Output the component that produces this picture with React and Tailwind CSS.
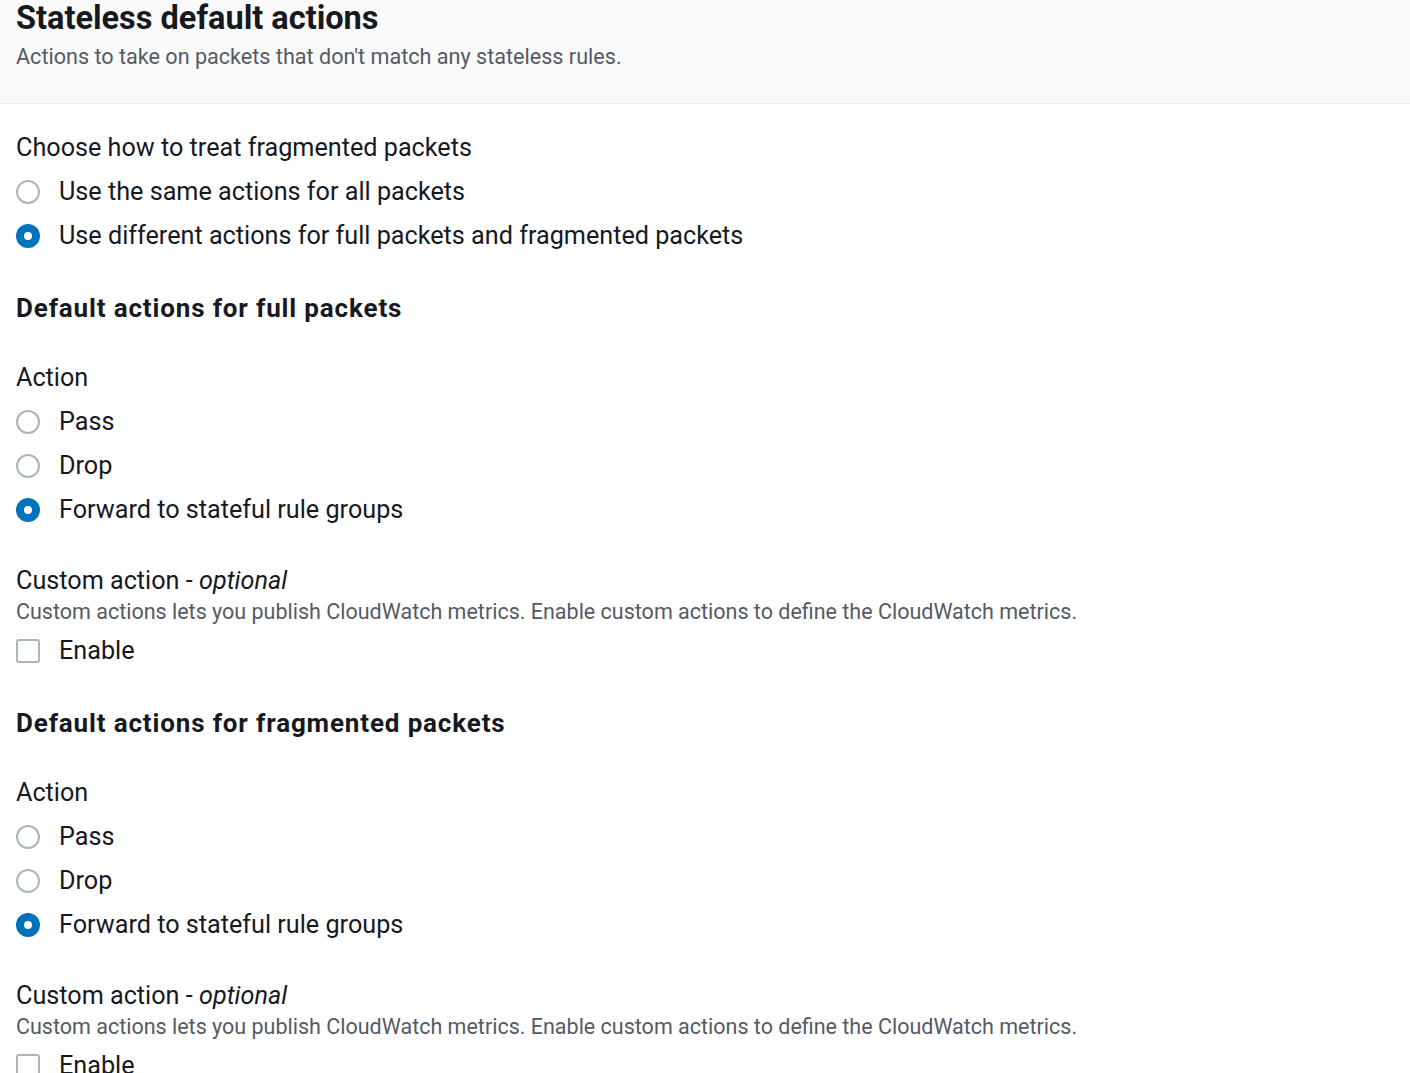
import React from "react";

const font = { fontFamily: "Roboto, 'Open Sans', sans-serif" };

function Radio({ checked, label }) {
  return (
    <div className="flex items-center h-[44px]">
      {checked ? (
        <span className="box-border w-[24px] h-[24px] rounded-full border-[8px] border-[#0073bb] bg-white shrink-0" />
      ) : (
        <span className="box-border w-[24px] h-[24px] rounded-full border-2 border-[#aab7b8] bg-white shrink-0" />
      )}
      <span className="ml-[19px] text-[25.2px] text-[#16191f] whitespace-nowrap">{label}</span>
    </div>
  );
}

function Section({ title }) {
  return (
    <div>
      <div className="h-[44px] flex items-center text-[26px] tracking-[0.85px] font-bold text-[#16191f] whitespace-nowrap">{title}</div>
      <div className="mt-[26px] h-[44px] flex items-center text-[25.2px] text-[#16191f]">Action</div>
      <Radio label="Pass" />
      <Radio label="Drop" />
      <Radio checked label="Forward to stateful rule groups" />
      <div className="mt-[33px] h-[32px] flex items-center text-[25.2px] text-[#16191f] whitespace-nowrap">
        Custom action -&nbsp;<i>optional</i>
      </div>
      <div className="h-[30px] flex items-center text-[21.5px] text-[#545b64] whitespace-nowrap">
        Custom actions lets you publish CloudWatch metrics. Enable custom actions to define the CloudWatch metrics.
      </div>
      <div className="mt-[4px] h-[40px] flex items-center">
        <span className="box-border w-[24px] h-[24px] rounded-[3px] border-2 border-[#aab7b8] bg-white shrink-0" />
        <span className="ml-[19px] text-[25.2px] text-[#16191f]">Enable</span>
      </div>
    </div>
  );
}

export default function App() {
  return (
    <div className="w-[1410px] h-[1073px] overflow-hidden bg-white" style={font}>
      <div className="h-[104px] bg-[#fafafa] border-b border-[#eaeded] pl-[16px]">
        <div className="h-[36px] flex items-center text-[32.5px] font-bold text-[#16191f] whitespace-nowrap">Stateless default actions</div>
        <div className="mt-[7px] h-[28px] flex items-center text-[21.6px] text-[#545b64] whitespace-nowrap">
          Actions to take on packets that don't match any stateless rules.
        </div>
      </div>
      <div className="pl-[16px] pt-[22px]">
        <div className="h-[44px] flex items-center text-[25.2px] text-[#16191f] whitespace-nowrap">Choose how to treat fragmented packets</div>
        <Radio label="Use the same actions for all packets" />
        <Radio checked label="Use different actions for full packets and fragmented packets" />
        <div className="mt-[28px]">
          <Section title="Default actions for full packets" />
        </div>
        <div className="mt-[30px]">
          <Section title="Default actions for fragmented packets" />
        </div>
      </div>
    </div>
  );
}
